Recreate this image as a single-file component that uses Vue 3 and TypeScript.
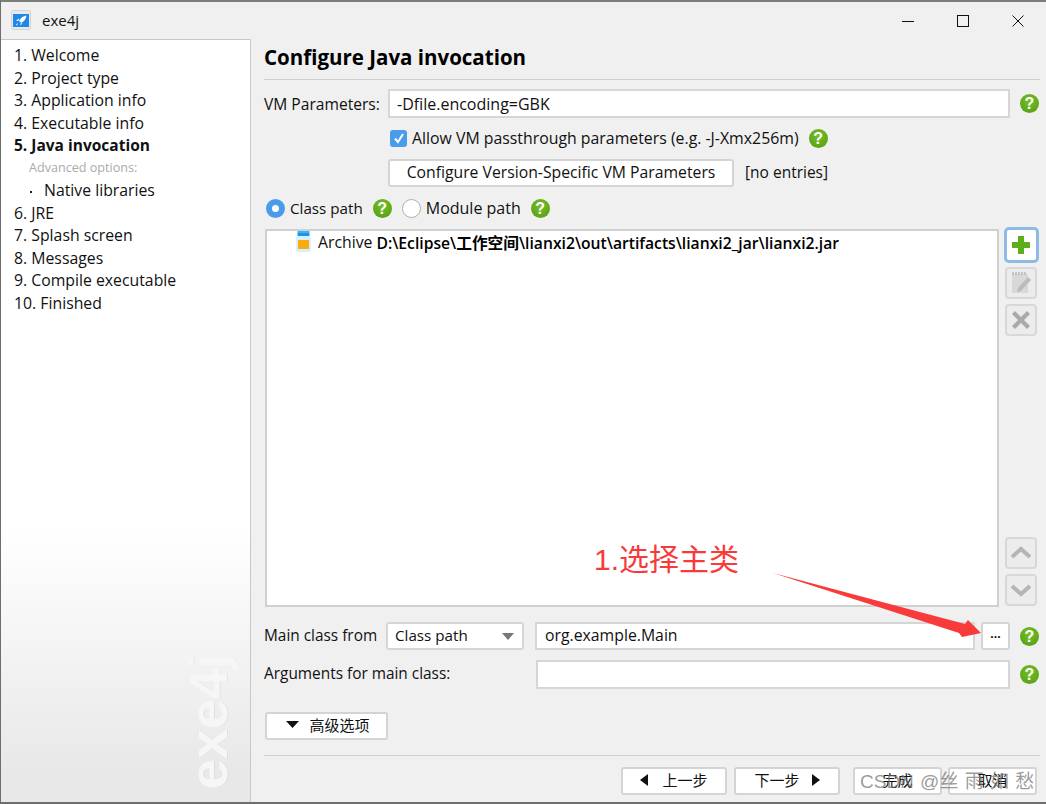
<script setup lang="ts">
const steps = [
  { label: '1. Welcome' },
  { label: '2. Project type' },
  { label: '3. Application info' },
  { label: '4. Executable info' },
  { label: '5. Java invocation', active: true },
  { label: 'Advanced options:', muted: true },
  { label: 'Native libraries', sub: true },
  { label: '6. JRE' },
  { label: '7. Splash screen' },
  { label: '8. Messages' },
  { label: '9. Compile executable' },
  { label: '10. Finished' },
]
</script>

<template>
  <div class="window">
    <header class="titlebar">
      <div class="app-title">
        <svg class="app-icon" width="20" height="20" viewBox="0 0 20 20">
          <rect x="0.5" y="0.5" width="19" height="19" rx="2" fill="#e9e9e9" stroke="#d4d4d4" />
          <rect x="2" y="4" width="16" height="13" fill="#1e88ea" />
          <path d="M15.5 5.5 C12 6 9.5 8 8 11 L10 13 C13 11.5 15 9 15.5 5.5 Z" fill="#fff" />
          <path d="M8 8.5 L5 10.5 L7.5 11 Z M11.5 13 L9.5 15.5 L9.5 13.5 Z M5 14.5 L7 13 L6 15.5 Z" fill="#fff" />
        </svg>
        <span>exe4j</span>
      </div>
      <div class="win-controls">
        <svg width="14" height="14" viewBox="0 0 14 14"><path d="M1 7.5H13" stroke="#111" fill="none" /></svg>
        <svg width="14" height="14" viewBox="0 0 14 14"><rect x="1.5" y="1.5" width="11" height="11" stroke="#111" fill="none" /></svg>
        <svg width="14" height="14" viewBox="0 0 14 14"><path d="M1.5 1.5L12.5 12.5M12.5 1.5L1.5 12.5" stroke="#111" fill="none" /></svg>
      </div>
    </header>

    <div class="body">
      <nav class="sidebar">
        <div
          v-for="s in steps"
          :key="s.label"
          class="step"
          :class="{ active: s.active, muted: s.muted, sub: s.sub }"
        >{{ s.label }}</div>
        <div class="brand">exe4j</div>
      </nav>

      <main class="content">
        <h1 class="heading">Configure Java invocation</h1>

        <div class="vm-row">
          <label class="vm-label">VM Parameters:</label>
          <div class="field vm-field">-Dfile.encoding=GBK</div>
          <span class="help vm-help">?</span>
        </div>

        <div class="check-row">
          <span class="checkbox">
            <svg width="14" height="14" viewBox="0 0 14 14"><path d="M3 7.5L6 11L11 3" stroke="#fff" stroke-width="2" fill="none" /></svg>
          </span>
          <span class="check-label">Allow VM passthrough parameters (e.g. -J-Xmx256m)</span>
          <span class="help">?</span>
        </div>

        <div class="config-row">
          <button class="btn config-btn">Configure Version-Specific VM Parameters</button>
          <span class="entries">[no entries]</span>
        </div>

        <div class="radio-row">
          <span class="radio on"></span>
          <span class="class-path">Class path</span>
          <span class="help">?</span>
          <span class="radio"></span>
          <span>Module path</span>
          <span class="help">?</span>
        </div>

        <div class="list-row">
          <div class="listbox">
            <div class="entry">
              <svg width="16" height="22" viewBox="0 0 16 22">
                <rect x="1.5" y="0" width="12" height="2" fill="#36b6f8" />
                <rect x="1.5" y="2" width="12" height="3" fill="#1f94e6" />
                <rect x="0" y="5" width="15" height="16" rx="2" fill="#d8f0fd" />
                <rect x="2" y="9" width="11" height="9" fill="#fbab0f" />
              </svg>
              <span class="entry-type">Archive</span>
              <b>D:\Eclipse\工作空间\lianxi2\out\artifacts\lianxi2_jar\lianxi2.jar</b>
            </div>
          </div>
          <div class="side-tools">
            <button class="tool focused">
              <svg width="20" height="20" viewBox="0 0 20 20"><path d="M7 1H13V7H19V13H13V19H7V13H1V7H7Z" fill="#5cae1a" /></svg>
            </button>
            <button class="tool">
              <svg width="22" height="24" viewBox="0 0 22 24">
                <rect x="2" y="3" width="16" height="19" fill="#d8d8d8" />
                <path d="M3 1V4M6 1V4M9 1V4M12 1V4M15 1V4" stroke="#b4b4b4" stroke-width="1.4" />
                <path d="M8 17L18 6L21 9L11 20L7 21Z" fill="#bcbcbc" />
              </svg>
            </button>
            <button class="tool">
              <svg width="22" height="22" viewBox="0 0 22 22"><path d="M5 2L11 8L17 2L20 5L14 11L20 17L17 20L11 14L5 20L2 17L8 11L2 5Z" fill="#a9a9a9" /></svg>
            </button>
            <div class="tools-gap"></div>
            <button class="tool">
              <svg width="22" height="14" viewBox="0 0 22 14"><path d="M2 11L11 3L20 11" stroke="#b5b5b5" stroke-width="4" fill="none" /></svg>
            </button>
            <button class="tool">
              <svg width="22" height="14" viewBox="0 0 22 14"><path d="M2 3L11 11L20 3" stroke="#b5b5b5" stroke-width="4" fill="none" /></svg>
            </button>
          </div>
        </div>

        <div class="main-row">
          <label class="main-label">Main class from</label>
          <div class="select">
            <span class="select-value">Class path</span>
            <svg width="12" height="7" viewBox="0 0 12 7"><path d="M0 0H12L6 7Z" fill="#777" /></svg>
          </div>
          <div class="field main-field">org.example.Main</div>
          <button class="btn dots">...</button>
          <span class="help">?</span>
        </div>

        <div class="args-row">
          <label class="args-label">Arguments for main class:</label>
          <div class="field args-field"></div>
          <span class="help">?</span>
        </div>

        <button class="btn adv-btn">
          <svg width="13" height="7" viewBox="0 0 13 7"><path d="M0 0H13L6.5 7Z" fill="#111" /></svg>
          <span>高级选项</span>
        </button>

        <footer class="footer">
          <button class="btn nav-btn prev-btn">
            <svg width="8" height="12" viewBox="0 0 8 12"><path d="M8 0V12L0 6Z" fill="#111" /></svg>
            <span>上一步</span>
          </button>
          <button class="btn nav-btn">
            <span>下一步</span>
            <svg width="8" height="12" viewBox="0 0 8 12"><path d="M0 0V12L8 6Z" fill="#111" /></svg>
          </button>
          <button class="btn end-btn first-end">完成</button>
          <button class="btn end-btn last-end">取消</button>
        </footer>
      </main>
    </div>

    <div class="note">1.选择主类</div>
    <svg class="arrow" width="230" height="80" viewBox="0 0 230 80">
      <path d="M0 2L192 53L195 49L208 62L189 66L186 62Z" fill="#f93a3a" />
    </svg>
    <div class="watermark">CSDN @丝 雨 如 愁</div>
  </div>
</template>

<style scoped>
.window {
  position: relative;
  width: 1046px;
  height: 804px;
  box-sizing: border-box;
  display: flex;
  flex-direction: column;
  overflow: hidden;
  background: #f0f0f0;
  border-top: 2px solid #7c7c7c;
  border-left: 1px solid #6e6e6e;
  border-bottom: 2px solid #6e6e6e;
  font-family: "Open Sans", "Noto Sans CJK SC", sans-serif;
  font-size: 16px;
  color: #111;
}
.titlebar {
  height: 37px;
  flex: none;
  display: flex;
  align-items: center;
  justify-content: space-between;
}
.app-title {
  display: flex;
  align-items: center;
  gap: 11px;
  padding-left: 10px;
  padding-bottom: 2px;
  font-size: 15px;
}
.win-controls {
  display: flex;
  gap: 41px;
  padding-right: 21px;
}
.body {
  flex: 1;
  display: flex;
  min-height: 0;
}
.sidebar {
  position: relative;
  width: 250px;
  flex: none;
  box-sizing: border-box;
  padding: 4px 0 0 13px;
  background: linear-gradient(#fff 0, #fff 64%, #e8e8e8 96%, #e8e8e8 100%);
  border-top: 1px solid #c8c8c8;
  border-right: 1px solid #c8c8c8;
  font-size: 15.8px;
}
.step {
  height: 22.5px;
  line-height: 22.5px;
  white-space: nowrap;
}
.step.active { font-weight: 700; font-size: 15.5px; }
.step.muted {
  padding-left: 15px;
  font-size: 12.6px;
  color: #aaa;
}
.step.sub { padding-left: 30px; position: relative; }
.step.sub::before {
  content: "";
  position: absolute;
  left: 16px;
  top: 12px;
  width: 2px;
  height: 2px;
  background: #222;
}
.brand {
  position: absolute;
  left: 180px;
  bottom: 13px;
  writing-mode: vertical-rl;
  transform: rotate(180deg);
  font-family: "Liberation Sans", sans-serif;
  font-weight: 700;
  font-size: 54px;
  line-height: 54px;
  color: #f6f6f6;
  text-shadow: 0 1px 0 rgba(0, 0, 0, 0.05);
}
.content {
  flex: 1;
  min-width: 0;
  display: flex;
  flex-direction: column;
  padding: 0 6px 0 13px;
}
.heading {
  margin: 0;
  height: 41px;
  box-sizing: border-box;
  padding-top: 4px;
  font-size: 20.5px;
  line-height: 28px;
  font-weight: 700;
  color: #000;
  border-bottom: 1px solid #cfcfcf;
}
.field {
  box-sizing: border-box;
  background: #fff;
  border: 2px solid #d6d6d6;
  padding-left: 7px;
  display: flex;
  align-items: center;
}
.help {
  width: 19px;
  height: 19px;
  flex: none;
  border-radius: 50%;
  background: radial-gradient(circle at 50% 35%, #78c026, #4f9a12);
  color: #fff;
  font-family: "Liberation Sans", sans-serif;
  font-weight: 700;
  font-size: 16px;
  line-height: 19px;
  text-align: center;
}
.vm-row {
  display: flex;
  align-items: center;
  margin-top: 9px;
  height: 29px;
}
.vm-label { width: 124px; flex: none; font-size: 15.6px; }
.vm-field { width: 622px; height: 29px; }
.vm-help { margin-left: 10px; }
.check-row {
  display: flex;
  align-items: center;
  margin: 6px 0 0 126px;
  height: 28px;
}
.check-label { font-size: 15.85px; }
.checkbox {
  width: 17px;
  height: 17px;
  border-radius: 3px;
  background: #4a9be8;
  display: flex;
  align-items: center;
  justify-content: center;
  margin-right: 5px;
}
.check-row .help { margin-left: 10px; }
.btn {
  box-sizing: border-box;
  background: #fff;
  border: 2px solid #d4d4d4;
  border-radius: 3px;
  padding: 0;
  font: inherit;
  color: #111;
  display: flex;
  align-items: center;
  justify-content: center;
}
.config-row {
  display: flex;
  align-items: center;
  gap: 11px;
  margin: 7px 0 0 124px;
}
.config-btn { width: 346px; height: 28px; font-size: 15.75px; padding-bottom: 2px; }
.entries { font-size: 15.5px; margin-top: -2px; }
.radio-row {
  display: flex;
  align-items: center;
  height: 20px;
  margin: 11px 0 0 2px;
}
.class-path { font-size: 15.2px; }
.radio {
  width: 19px;
  height: 19px;
  box-sizing: border-box;
  border-radius: 50%;
  border: 1px solid #b0b0b0;
  background: #fff;
  margin-right: 5px;
}
.radio.on {
  border: 6px solid #4a9be8;
}
.radio-row .help { margin: 0 10px; }
.list-row {
  display: flex;
  margin-top: 11px;
  height: 378px;
}
.listbox {
  width: 734px;
  margin-left: 1px;
  flex: none;
  box-sizing: border-box;
  background: #fff;
  border: 2px solid #d0d0d0;
}
.entry {
  display: flex;
  align-items: center;
  height: 22px;
  padding: 0 0 0 29px;
  white-space: nowrap;
}
.entry svg { margin-right: 6px; flex: none; }
.entry-type { margin-right: 4px; font-size: 15.8px; }
.entry b { font-weight: 600; font-size: 15.7px; color: #000; }
.side-tools {
  display: flex;
  flex-direction: column;
  align-items: center;
  width: 34px;
  margin-left: 5px;
  padding-bottom: 1px;
  gap: 5px;
}
.tool {
  width: 32px;
  height: 32px;
  box-sizing: border-box;
  flex: none;
  padding: 0;
  background: #ececec;
  border: 2px solid #d8d8d8;
  border-radius: 4px;
  display: flex;
  align-items: center;
  justify-content: center;
}
.tool.focused {
  width: 35px;
  height: 36px;
  background: #fff;
  border: 3px solid #8ebbe6;
  border-radius: 5px;
  margin-top: -2px;
  margin-bottom: -1px;
}
.tools-gap { flex: 1; }
.main-row {
  display: flex;
  align-items: center;
  margin: 15px 0 0 0;
  height: 28px;
}
.main-label { width: 122px; flex: none; font-size: 15.4px; margin-top: -2px; }
.select {
  box-sizing: border-box;
  width: 138px;
  height: 28px;
  background: #fff;
  border: 2px solid #d6d6d6;
  border-radius: 3px;
  display: flex;
  align-items: center;
  justify-content: space-between;
  padding: 0 8px 0 7px;
}
.select-value { font-size: 15.2px; margin-top: -2px; }
.main-field {
  width: 440px;
  height: 28px;
  margin-left: 11px;
  padding-left: 8px;
  padding-bottom: 2px;
  font-size: 15.8px;
}
.dots {
  width: 29px;
  height: 28px;
  margin-left: 6px;
  font-size: 12px;
  font-weight: 700;
  padding-bottom: 5px;
}
.main-row .help { margin-left: 10px; }
.args-row {
  display: flex;
  align-items: center;
  margin: 10px 0 0 0;
  height: 29px;
}
.args-label { width: 272px; flex: none; font-size: 15.4px; margin-top: -2px; }
.args-field { width: 474px; height: 29px; }
.args-row .help { margin-left: 10px; }
.adv-btn {
  width: 123px;
  height: 28px;
  margin: 23px 0 0 1px;
  gap: 10px;
  font-size: 15px;
  padding: 0 0 3px 3px;
}
.footer {
  display: flex;
  margin-top: 15px;
  padding-top: 11px;
  border-top: 1px solid #cfcfcf;
  padding-left: 357px;
  font-size: 15px;
}
.footer .btn { flex: none; font-size: 15px; padding-bottom: 3px; }
.nav-btn {
  width: 106px;
  height: 28px;
  gap: 12px;
  margin-right: 7px;
}
.prev-btn { gap: 14px; }
.end-btn { width: 89px; height: 28px; margin-right: 6px; }
.first-end { margin-left: 6px; }
.last-end { margin-right: 0; }
.note {
  position: absolute;
  left: 593px;
  top: 538px;
  font-family: "Liberation Sans", "Noto Sans CJK SC", sans-serif;
  font-size: 30px;
  line-height: 40px;
  color: #f93a3a;
}
.arrow {
  position: absolute;
  left: 772px;
  top: 569px;
}
.watermark {
  position: absolute;
  left: 859px;
  top: 768px;
  font-family: "Liberation Sans", "Noto Sans CJK SC", sans-serif;
  font-size: 19px;
  line-height: 24px;
  word-spacing: 1px;
  color: rgba(110, 110, 110, 0.7);
  white-space: nowrap;
}
</style>
